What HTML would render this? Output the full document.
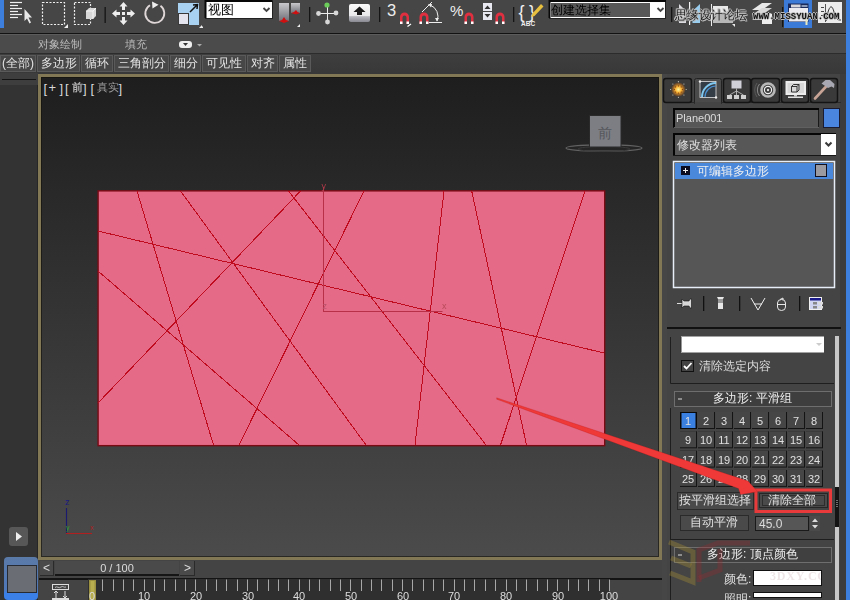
<!DOCTYPE html>
<html><head><meta charset="utf-8">
<style>
*{margin:0;padding:0;box-sizing:border-box}
html,body{width:850px;height:600px;overflow:hidden;background:#444;font-family:"Liberation Sans",sans-serif}
.a{position:absolute}
.t{position:absolute;white-space:nowrap;line-height:1;will-change:transform}
#tb{left:0;top:0;width:850px;height:33px;background:#464646}
#tbl{left:0;top:33px;width:850px;height:1px;background:#121212}
#rb{left:0;top:34px;width:850px;height:20px;background:#4b4b4b;border-top:1px solid #5c5c5c;border-bottom:1px solid #2c2c2c}
#br{left:0;top:54px;width:846px;height:20px;background:linear-gradient(#3e3e3e,#383838)}
.btn{will-change:transform;position:absolute;top:55px;height:17px;background:#474747;border:1px solid #5a5a5a;color:#e4e4e4;font-size:12px;text-align:center;line-height:15px}
#lc{left:0;top:73px;width:38px;height:527px;background:#333;border-right:1px solid #262626}
#vp{left:38px;top:74px;width:624px;height:486px;border:3px solid #827856;box-shadow:inset 0 0 0 1px rgba(20,16,8,0.6);background:linear-gradient(#1e1e1e,#4b4b4b)}
#cp{left:662px;top:74px;width:188px;height:526px;background:#444}
</style></head>
<body>
<div class="a" id="tb"></div>
<div class="a" id="tbl"></div>

<svg class="a" style="left:0;top:0" width="850" height="34" viewBox="0 0 850 34">
  <rect x="0" y="0" width="4" height="28" fill="#3d7fdc"/>
  <!-- select by name -->
  <g stroke="#f0f0f0" stroke-width="1.2">
    <line x1="10" y1="2.5" x2="22" y2="2.5"/><line x1="10" y1="5.5" x2="18" y2="5.5"/>
    <line x1="10" y1="8.5" x2="22" y2="8.5"/><line x1="10" y1="11.5" x2="18" y2="11.5"/>
    <line x1="10" y1="14.5" x2="22" y2="14.5"/><line x1="10" y1="17.5" x2="18" y2="17.5"/>
  </g>
  <path d="M24.5 9 L24.5 21 L27 18.5 L29.5 23.5 L31 22.5 L28.5 17.5 L32 17.5 Z" fill="#e8e8e8"/>
  <!-- dashed rect -->
  <rect x="42.5" y="2.5" width="22" height="22" fill="none" stroke="#f0f0f0" stroke-width="1.2" stroke-dasharray="2 1.5"/>
  <path d="M68 24 L68 28 L64 28 Z" fill="#f0f0f0"/>
  <rect x="74.5" y="2.5" width="16" height="22" fill="none" stroke="#f0f0f0" stroke-width="1.2" stroke-dasharray="2 1.5"/>
  <path d="M86 11 L89 8 L96 8 L96 16 L93 19 L86 19 Z" fill="#d8d8d8"/>
  <path d="M86 11 L93 11 L96 8 M93 11 L93 19" stroke="#fff" stroke-width="0.8" fill="none"/>
  <rect x="104.5" y="7" width="1.3" height="16" fill="#151515"/>
  <!-- move -->
  <g fill="#eee">
    <path d="M123.5 2 L127.5 6.5 L125 6.5 L125 10 L122 10 L122 6.5 L119.5 6.5 Z"/>
    <path d="M123.5 25 L127.5 20.5 L125 20.5 L125 17 L122 17 L122 20.5 L119.5 20.5 Z"/>
    <path d="M112 13.5 L116.5 9.5 L116.5 12 L120 12 L120 15 L116.5 15 L116.5 17.5 Z"/>
    <path d="M135 13.5 L130.5 9.5 L130.5 12 L127 12 L127 15 L130.5 15 L130.5 17.5 Z"/>
    <rect x="122" y="12" width="3" height="3"/>
  </g>
  <!-- rotate -->
  <path d="M150 5.2 A9.5 9.5 0 1 0 160.5 5.8" fill="none" stroke="#e0d8d8" stroke-width="1.8"/>
  <path d="M152 1.5 L158.5 4.8 L152.5 8.5 Z" fill="#eee"/>
  <!-- scale -->
  <rect x="178" y="3" width="21" height="22" fill="#a8d0f0"/>
  <rect x="178.5" y="13.5" width="10" height="11" fill="#e4e4ee" stroke="#3a3a3a" stroke-width="1"/>
  <path d="M190 12 L197 5 M193 5 L197.5 4.5 L197 9" stroke="#111" stroke-width="1.5" fill="none"/>
  <path d="M202 25 L202 28 L199 28 Z" fill="#eee"/>
  <!-- dropdown 视图 -->
  <rect x="205.5" y="1.5" width="67" height="17" fill="#fff" stroke="#222" stroke-width="1"/><path d="M205.5 18 L205.5 1 L272.5 1" stroke="#080808" stroke-width="2" fill="none"/>
  <path d="M263.5 8 L266.5 11 L269.5 8" stroke="#444" stroke-width="1.8" fill="none"/>
  <path d="M203 26 L203 28 L201 28 Z" fill="#eee"/>
  <!-- gray bars -->
  <defs>
    <linearGradient id="gb" x1="0" y1="0" x2="0" y2="1"><stop offset="0" stop-color="#c8c8cc"/><stop offset="1" stop-color="#70727a"/></linearGradient>
    <linearGradient id="key" x1="0" y1="0" x2="0" y2="1"><stop offset="0" stop-color="#fafafa"/><stop offset="0.65" stop-color="#e8e8ea"/><stop offset="0.7" stop-color="#b8b9c0"/><stop offset="1" stop-color="#8a8b92"/></linearGradient>
  </defs>
  <rect x="279" y="3" width="10" height="18" fill="url(#gb)"/>
  <rect x="291" y="3" width="9" height="10" fill="url(#gb)"/>
  <path d="M284 17 L286 20 L289 21 L284 23 L279 21 L282 20 Z" fill="#d01010"/>
  <path d="M296 10 L297.5 12 L300 13 L296 14.5 L291 13 L294 12 Z" fill="#d01010"/>
  <path d="M300 24 L300 27 L297 27 Z" fill="#eee"/>
  <rect x="309" y="7" width="1.3" height="15" fill="#151515"/>
  <!-- pivot -->
  <g stroke="#eee" stroke-width="1"><line x1="320" y1="13.5" x2="335" y2="13.5"/><line x1="327.5" y1="6" x2="327.5" y2="21"/></g>
  <circle cx="327" cy="5" r="2.6" fill="#6ccc5a"/>
  <circle cx="318.5" cy="13.5" r="2.4" fill="#d8d8d8"/>
  <circle cx="336" cy="13" r="2.4" fill="#d8d8d8"/>
  <circle cx="327.5" cy="22" r="2.4" fill="#d8d8d8"/>
  <!-- key button -->
  <rect x="349" y="4" width="21" height="18" rx="2" fill="url(#key)"/>
  <path d="M359.5 6.5 L365.5 12 L362 12 L362 15 L357 15 L357 12 L353.5 12 Z" fill="#1a1a1a"/>
  <rect x="379" y="7" width="1.3" height="15" fill="#151515"/>
  <!-- snaps -->
  <text x="387" y="15.5" font-size="16.5" fill="#eee" font-family="Liberation Sans">3</text>
  <g id="mag">
    <path d="M400 24 L400 17 A4.5 4.5 0 0 1 409 17 L409 24 L406.5 24 L406.5 17.5 A2 2 0 0 0 402.5 17.5 L402.5 24 Z" fill="#e03040"/>
    <rect x="400" y="21.5" width="2.5" height="2.5" fill="#fff"/><rect x="406.5" y="21.5" width="2.5" height="2.5" fill="#fff"/>
  </g>
  <path d="M407.5 26.5 L411 24" stroke="#fff" stroke-width="1.2"/>
  <use href="#mag" x="19.5"/>
  <path d="M422 12 L432 2" stroke="#eee" stroke-width="1"/>
  <path d="M430 5 A12 12 0 0 1 437 21" stroke="#eee" stroke-width="1" fill="none"/>
  <path d="M429 22.5 L442 22.5" stroke="#eee" stroke-width="1"/>
  <path d="M428 4 L432 4 L431 7.5 Z M435 18 L439 18 L437 21.5 Z" fill="#eee"/>
  <text x="450" y="15.5" font-size="15" fill="#eee" font-family="Liberation Sans">%</text>
  <use href="#mag" x="64.5"/>
  <rect x="483" y="3" width="9" height="8" fill="#e8e8f0"/><rect x="483" y="12" width="9" height="8" fill="#e8e8f0"/>
  <path d="M484.5 9 L487.5 5.5 L490.5 9 Z M484.5 14 L490.5 14 L487.5 17.5 Z" fill="#333"/>
  <use href="#mag" x="95.5"/>
  <rect x="513" y="7" width="1.3" height="15" fill="#151515"/>
  <!-- named sel -->
  <text x="518.5" y="17.5" font-size="18" fill="#eee" font-family="Liberation Sans">{</text><text x="529" y="17.5" font-size="18" fill="#eee" font-family="Liberation Sans">}</text>
  <text x="521" y="25.5" font-size="6.5" font-weight="bold" fill="#eee" font-family="Liberation Sans">ABC</text>
  <path d="M532 14 L541 4 L543.5 6.5 L534.5 16 L531 17 Z" fill="#e8c040"/>
  <!-- dropdown 创建选择集 -->
  <rect x="549.5" y="1.5" width="116" height="17" fill="#fff" stroke="#222" stroke-width="1"/><path d="M549.5 18 L549.5 1 L666 1" stroke="#080808" stroke-width="2" fill="none"/>
  <rect x="551" y="3" width="99" height="14" fill="#585858"/>
  <path d="M657.5 8 L660.5 11 L663.5 8" stroke="#444" stroke-width="1.8" fill="none"/>
  <rect x="671" y="7" width="1.3" height="15" fill="#151515"/>
  <!-- mirror -->
  <path d="M679 4 L686 11 L686 23 L679 23 Z" fill="#dcdce0"/>
  <path d="M700 4 L700 23 L692.5 23 L692.5 11 Z" fill="#98cdf0"/>
  <rect x="689" y="2" width="1.2" height="23" fill="#f4f4f4"/>
  <!-- align -->
  <rect x="711" y="4" width="1" height="22" fill="#eee"/>
  <rect x="713" y="6" width="15" height="8" fill="#e8e8e8"/>
  <rect x="713" y="15" width="20" height="8" fill="#b8b8b8"/>
  <path d="M732 24 L735 24 L735 27 Z" fill="#eee"/>
  <!-- layers -->
  <path d="M752 10 L762 3 L772 3 L762 10 Z" fill="#e8e8e8"/>
  <path d="M752 15 L762 8 L772 8 L762 15 Z" fill="#d8d8d8"/>
  <path d="M752 20 L762 13 L772 13 L762 20 Z" fill="#c8c8c8"/>
  <rect x="762" y="14" width="10" height="10" fill="#eee"/>
  <rect x="782" y="7" width="1.3" height="20" fill="#151515"/>
  <!-- explorer (active) -->
  <rect x="784" y="0" width="28" height="28" fill="#3c7ad8"/>
  <rect x="788" y="3.5" width="20.5" height="18.5" fill="#1a2a5a"/>
  <rect x="791" y="4.5" width="9.5" height="3" fill="#d8d8dc"/>
  <rect x="801.5" y="5" width="6" height="2" fill="#8a9ab8"/>
  <rect x="789" y="8" width="19" height="13.5" fill="#ececf0"/>
  <rect x="805.5" y="13" width="2" height="12" fill="#e8e8c0"/>
  <!-- curve editor -->
  <rect x="818" y="2" width="24" height="21" fill="#ececec"/>
  <path d="M826 21 C829 4 832 4 834 12 C836 20 838 20 841 20" stroke="#333" stroke-width="1" fill="none"/>
  <rect x="825" y="4" width="1" height="18" fill="#555"/>
  <rect x="821" y="7" width="3" height="1" fill="#444"/><rect x="821" y="11" width="3" height="1" fill="#444"/><rect x="821" y="15" width="3" height="1" fill="#444"/>
  <rect x="846" y="0" width="4" height="34" fill="#3d7fdc"/>
</svg>
<div class="t" style="left:207.5px;top:3.5px;font-size:12.5px;color:#000">视图</div>
<div class="t" style="left:551px;top:4px;font-size:12px;color:#000">创建选择集</div>
<div class="t" style="left:675px;top:8.5px;font-size:12px;color:#1a1a1a;text-shadow:1px 0 #bbb,-1px 0 #bbb,0 1px #bbb,0 -1px #bbb,1px 1px #bbb,-1px -1px #bbb">思缘设计论坛</div>
<div class="t" style="left:753px;top:13px;font-size:9px;font-family:'Liberation Mono',monospace;font-weight:bold;color:#111;text-shadow:1px 0 #bbb,-1px 0 #bbb,0 1px #bbb,0 -1px #bbb">WWW.MISSYUAN.COM</div>

<!--TBEND-->
<div class="a" id="rb"></div>
<div class="a" id="br"></div>

<div class="t" style="left:38px;top:39px;font-size:11px;color:#bcbcbc">对象绘制</div>
<div class="t" style="left:125px;top:39px;font-size:11px;color:#bcbcbc">填充</div>
<svg class="a" style="left:175px;top:38px" width="30" height="14">
  <rect x="4" y="3" width="13" height="7" rx="3" fill="#eee"/>
  <path d="M8 5 L13 5 L10.5 8 Z" fill="#333"/>
  <path d="M22 6 L27 6 L24.5 8.5 Z" fill="#aaa"/>
</svg>
<div class="btn" style="left:0;width:36px">(全部)</div>
<div class="btn" style="left:37px;width:43px">多边形</div>
<div class="btn" style="left:81px;width:32px">循环</div>
<div class="btn" style="left:114px;width:55px">三角剖分</div>
<div class="btn" style="left:170px;width:31px">细分</div>
<div class="btn" style="left:202px;width:44px">可见性</div>
<div class="btn" style="left:247px;width:31px">对齐</div>
<div class="btn" style="left:279px;width:32px">属性</div>
<div class="a" id="lc"></div>

<div class="a" style="left:0;top:73px;width:38px;height:12px;background:#3e3e3e"></div>
<div class="a" style="left:2px;top:78.5px;width:34px;height:1.5px;background:#141414"></div>
<div class="a" style="left:9px;top:527px;width:19px;height:19px;border-radius:3px;background:#575757"></div>
<svg class="a" style="left:9px;top:527px" width="19" height="19"><path d="M7 5 L13 9.5 L7 14 Z" fill="#eee"/></svg>
<div class="a" style="left:4px;top:557px;width:34px;height:43px;border-radius:4px;background:linear-gradient(#5a7aa8,#4f78b8 75%,#3a80e8 85%)"></div>
<div class="a" style="left:7px;top:565px;width:30px;height:28px;background:#6a6d74;border:1px solid #262a32"></div>
<div class="a" id="vp"></div>

<svg class="a" style="left:40px;top:78px" width="90" height="20" viewBox="40 78 90 20">
  <g font-family="Liberation Sans" font-size="13" fill="#d8d8d8">
    <text x="43.5" y="92.5">[</text><text x="48.5" y="92">+</text><text x="59.5" y="92.5">]</text>
    <text x="65" y="92.5">[</text><text x="83" y="92.5">]</text>
    <text x="90.5" y="92.5">[</text><text x="118.5" y="92.5">]</text>
  </g>
</svg>
<div class="t" style="left:71.5px;top:81.5px;font-size:11px;color:#b0b0b0;font-weight:bold">前</div>
<div class="t" style="left:96.5px;top:82px;font-size:11px;color:#9c9c9c;font-family:'Liberation Serif',serif">真实</div>
<svg class="a" style="left:560px;top:108px" width="90" height="50" viewBox="560 108 90 50">
  <ellipse cx="604" cy="148" rx="38" ry="3.2" fill="none" stroke="#626262" stroke-width="1.2"/>
  <ellipse cx="604" cy="149" rx="26" ry="2.5" fill="none" stroke="#3a3a3a" stroke-width="1"/>
  <rect x="589.5" y="115.5" width="31.5" height="31.5" fill="#7c7e84" stroke="#2a2a2a" stroke-width="1"/>
  <text x="598" y="138" font-size="14" fill="#55575c" font-family="Liberation Sans">前</text>
</svg>
<svg class="a" style="left:55px;top:490px" width="50" height="50" viewBox="55 490 50 50">
  <text x="65" y="505" font-size="9" fill="#1a1a80" font-family="Liberation Sans">z</text>
  <line x1="66.5" y1="508" x2="66.5" y2="533" stroke="#1a1a70" stroke-width="1.1"/>
  <line x1="66" y1="533.5" x2="92" y2="533.5" stroke="#b02020" stroke-width="1.1"/>
  <text x="66" y="530" font-size="7" fill="#30a030" font-family="Liberation Sans">y</text>
  <text x="90" y="530" font-size="7" fill="#b02020" font-family="Liberation Sans">x</text>
</svg>

<div class="a" style="left:40px;top:561px;width:14px;height:15px;background:#4a4a4a;border-right:1px solid #2a2a2a;border-bottom:1px solid #2a2a2a"></div>
<div class="t" style="left:43px;top:562px;font-size:12px;color:#ddd">&lt;</div>
<div class="a" style="left:55px;top:561px;width:124px;height:15px;background:#4a4a4a;border-bottom:2px solid #151515"></div>
<div class="t" style="left:55px;top:563px;width:124px;text-align:center;font-size:11px;color:#dcdcdc">0 / 100</div>
<div class="a" style="left:180px;top:561px;width:15px;height:15px;background:#4a4a4a;border-right:1px solid #2a2a2a;border-bottom:1px solid #2a2a2a"></div>
<div class="t" style="left:184px;top:562px;font-size:12px;color:#ddd">&gt;</div>
<div class="a" style="left:39px;top:578px;width:623px;height:2px;background:#141414"></div>
<div class="a" style="left:88px;top:579px;width:521px;height:21px;background:#2f2f2f"></div>
<svg class="a" style="left:0;top:575px" width="662" height="25" viewBox="0 575 662 25">
  <rect x="52.5" y="584.5" width="16" height="5" fill="none" stroke="#ddd" stroke-width="1"/>
  <path d="M55 587.5 C57 585.5 59 589 61 587 C63 585.5 64 588 66 587" stroke="#ddd" fill="none" stroke-width="0.8"/>
  <path d="M56 591 L56 598 M54 593 L56 591 L58 593 M65 591 L65 598 M63 596 L65 598 L67 596" stroke="#ddd" stroke-width="1" fill="none"/>
  <rect x="52" y="598" width="17" height="2" fill="#ddd"/>
  <rect x="89" y="580" width="7" height="20" fill="#9a9040"/>
  <rect x="90.5" y="581" width="4" height="19" fill="#b8ae50"/>
  <g stroke="#a8a8a8" stroke-width="1"><line x1="102.5" y1="579.5" x2="102.5" y2="591"/><line x1="113.5" y1="579.5" x2="113.5" y2="591"/><line x1="123.5" y1="579.5" x2="123.5" y2="591"/><line x1="133.5" y1="579.5" x2="133.5" y2="591"/><line x1="144.5" y1="579.5" x2="144.5" y2="591"/><line x1="154.5" y1="579.5" x2="154.5" y2="591"/><line x1="164.5" y1="579.5" x2="164.5" y2="591"/><line x1="175.5" y1="579.5" x2="175.5" y2="591"/><line x1="185.5" y1="579.5" x2="185.5" y2="591"/><line x1="195.5" y1="579.5" x2="195.5" y2="591"/><line x1="206.5" y1="579.5" x2="206.5" y2="591"/><line x1="216.5" y1="579.5" x2="216.5" y2="591"/><line x1="226.5" y1="579.5" x2="226.5" y2="591"/><line x1="237.5" y1="579.5" x2="237.5" y2="591"/><line x1="247.5" y1="579.5" x2="247.5" y2="591"/><line x1="257.5" y1="579.5" x2="257.5" y2="591"/><line x1="268.5" y1="579.5" x2="268.5" y2="591"/><line x1="278.5" y1="579.5" x2="278.5" y2="591"/><line x1="288.5" y1="579.5" x2="288.5" y2="591"/><line x1="299.5" y1="579.5" x2="299.5" y2="591"/><line x1="309.5" y1="579.5" x2="309.5" y2="591"/><line x1="319.5" y1="579.5" x2="319.5" y2="591"/><line x1="330.5" y1="579.5" x2="330.5" y2="591"/><line x1="340.5" y1="579.5" x2="340.5" y2="591"/><line x1="350.5" y1="579.5" x2="350.5" y2="591"/><line x1="361.5" y1="579.5" x2="361.5" y2="591"/><line x1="371.5" y1="579.5" x2="371.5" y2="591"/><line x1="381.5" y1="579.5" x2="381.5" y2="591"/><line x1="392.5" y1="579.5" x2="392.5" y2="591"/><line x1="402.5" y1="579.5" x2="402.5" y2="591"/><line x1="412.5" y1="579.5" x2="412.5" y2="591"/><line x1="423.5" y1="579.5" x2="423.5" y2="591"/><line x1="433.5" y1="579.5" x2="433.5" y2="591"/><line x1="443.5" y1="579.5" x2="443.5" y2="591"/><line x1="454.5" y1="579.5" x2="454.5" y2="591"/><line x1="464.5" y1="579.5" x2="464.5" y2="591"/><line x1="474.5" y1="579.5" x2="474.5" y2="591"/><line x1="485.5" y1="579.5" x2="485.5" y2="591"/><line x1="495.5" y1="579.5" x2="495.5" y2="591"/><line x1="506.5" y1="579.5" x2="506.5" y2="591"/><line x1="516.5" y1="579.5" x2="516.5" y2="591"/><line x1="526.5" y1="579.5" x2="526.5" y2="591"/><line x1="537.5" y1="579.5" x2="537.5" y2="591"/><line x1="547.5" y1="579.5" x2="547.5" y2="591"/><line x1="557.5" y1="579.5" x2="557.5" y2="591"/><line x1="568.5" y1="579.5" x2="568.5" y2="591"/><line x1="578.5" y1="579.5" x2="578.5" y2="591"/><line x1="588.5" y1="579.5" x2="588.5" y2="591"/><line x1="599.5" y1="579.5" x2="599.5" y2="591"/><line x1="609.5" y1="579.5" x2="609.5" y2="591"/></g>
</svg>
<div class="t" style="left:77.4px;top:591px;width:30px;text-align:center;font-size:11px;color:#ddd">0</div><div class="t" style="left:129.1px;top:591px;width:30px;text-align:center;font-size:11px;color:#ddd">10</div><div class="t" style="left:180.8px;top:591px;width:30px;text-align:center;font-size:11px;color:#ddd">20</div><div class="t" style="left:232.5px;top:591px;width:30px;text-align:center;font-size:11px;color:#ddd">30</div><div class="t" style="left:284.2px;top:591px;width:30px;text-align:center;font-size:11px;color:#ddd">40</div><div class="t" style="left:335.9px;top:591px;width:30px;text-align:center;font-size:11px;color:#ddd">50</div><div class="t" style="left:387.6px;top:591px;width:30px;text-align:center;font-size:11px;color:#ddd">60</div><div class="t" style="left:439.3px;top:591px;width:30px;text-align:center;font-size:11px;color:#ddd">70</div><div class="t" style="left:491.0px;top:591px;width:30px;text-align:center;font-size:11px;color:#ddd">80</div><div class="t" style="left:542.7px;top:591px;width:30px;text-align:center;font-size:11px;color:#ddd">90</div><div class="t" style="left:594.4px;top:591px;width:30px;text-align:center;font-size:11px;color:#ddd">100</div><div class="a" id="cp"></div>
<div class="a" style="left:662px;top:74px;width:5px;height:526px;background:#464646"></div>
<div class="a" style="left:840px;top:74px;width:6px;height:526px;background:#3c3c3c"></div>
<div class="a" style="left:846px;top:34px;width:4px;height:566px;background:#3d7fdc"></div>
<svg class="a" style="left:662px;top:73px" width="184" height="527" viewBox="662 73 184 527">
  <defs>
    <radialGradient id="sun"><stop offset="0" stop-color="#fff8a0"/><stop offset="0.45" stop-color="#f8b030"/><stop offset="1" stop-color="#c06010" stop-opacity="0.2"/></radialGradient>
  </defs>
  <line x1="667" y1="102.5" x2="841" y2="102.5" stroke="#2a2a2a" stroke-width="1"/>
  <!-- tabs -->
  <rect x="663.5" y="78.5" width="28" height="24" rx="2.5" fill="#3a3a3a" stroke="#141414" stroke-width="1.5"/>
  <rect x="694.5" y="78.5" width="27" height="26" rx="2" fill="#4a4a4a" stroke="#222" stroke-width="1"/>
  <rect x="695" y="102" width="26" height="3" fill="#444"/>
  <rect x="723.5" y="78.5" width="27" height="24" rx="2.5" fill="#3a3a3a" stroke="#141414" stroke-width="1.5"/>
  <rect x="751.5" y="78.5" width="28" height="24" rx="2.5" fill="#3a3a3a" stroke="#141414" stroke-width="1.5"/>
  <rect x="781.5" y="78.5" width="27" height="24" rx="2.5" fill="#3a3a3a" stroke="#141414" stroke-width="1.5"/>
  <rect x="810.5" y="78.5" width="27" height="24" rx="2.5" fill="#3a3a3a" stroke="#141414" stroke-width="1.5"/>
  <!-- sun -->
  <circle cx="678.4" cy="89.5" r="7" fill="url(#sun)"/>
  <circle cx="682.40" cy="89.50" r="0.6" fill="#7a3a10"/><circle cx="686.20" cy="89.50" r="0.6" fill="#c8c8c0"/><circle cx="681.23" cy="92.05" r="0.6" fill="#7a3a10"/><circle cx="683.92" cy="95.02" r="0.6" fill="#c8c8c0"/><circle cx="678.40" cy="93.10" r="0.6" fill="#7a3a10"/><circle cx="678.40" cy="97.30" r="0.6" fill="#c8c8c0"/><circle cx="675.57" cy="92.05" r="0.6" fill="#7a3a10"/><circle cx="672.88" cy="95.02" r="0.6" fill="#c8c8c0"/><circle cx="674.40" cy="89.50" r="0.6" fill="#7a3a10"/><circle cx="670.60" cy="89.50" r="0.6" fill="#c8c8c0"/><circle cx="675.57" cy="86.95" r="0.6" fill="#7a3a10"/><circle cx="672.88" cy="83.98" r="0.6" fill="#c8c8c0"/><circle cx="678.40" cy="85.90" r="0.6" fill="#7a3a10"/><circle cx="678.40" cy="81.70" r="0.6" fill="#c8c8c0"/><circle cx="681.23" cy="86.95" r="0.6" fill="#7a3a10"/><circle cx="683.92" cy="83.98" r="0.6" fill="#c8c8c0"/>
  <!-- modify arc -->
  <rect x="700" y="81.5" width="16" height="16" fill="#343c46" stroke="#e0e0e0" stroke-width="0.8"/>
  <path d="M702 97 A14 14 0 0 1 716 83" stroke="#80c8f0" stroke-width="2" fill="none"/>
  <path d="M705 97 A11 11 0 0 1 716 86" stroke="#4a90d0" stroke-width="1.2" fill="none"/>
  <circle cx="700" cy="81.5" r="1.2" fill="#eee"/><circle cx="716" cy="97.5" r="1.2" fill="#eee"/>
  <!-- hierarchy -->
  <rect x="731.5" y="80.5" width="10" height="8" fill="#d0d0d8"/>
  <path d="M736.5 88.5 L736.5 95 M736.5 91 L729.5 95 M736.5 91 L743.5 95" stroke="#ccc" stroke-width="0.8" fill="none"/>
  <rect x="727" y="95" width="5" height="4" fill="#d0d0d0"/><rect x="734" y="95" width="5" height="4" fill="#d0d0d0"/><rect x="741" y="95" width="5" height="4" fill="#d0d0d0"/>
  <!-- motion -->
  <circle cx="768" cy="90" r="6.5" fill="none" stroke="#b8b8b8" stroke-width="2.6"/>
  <circle cx="768" cy="90" r="3.6" fill="none" stroke="#f0f0f0" stroke-width="1.2"/>
  <circle cx="768" cy="90" r="1.2" fill="#e0e0e0"/>
  <path d="M759.5 84 A9.5 9.5 0 0 0 759.5 96" stroke="#8a8a8a" stroke-width="1" fill="none"/>
  <path d="M757 83 A12 12 0 0 0 757 97" stroke="#5a5a5a" stroke-width="1" fill="none"/>
  <!-- display -->
  <rect x="785.5" y="81" width="20.5" height="14" fill="#ececec"/>
  <rect x="787.5" y="83" width="16.5" height="10" fill="#d8d8d8"/>
  <path d="M791.5 86.5 L793.5 84.5 L799 84.5 L799 90 L797 92 L791.5 92 Z M791.5 86.5 L797 86.5 L797 92 M797 86.5 L799 84.5" stroke="#222" stroke-width="0.9" fill="none"/>
  <rect x="794" y="95" width="3" height="1.5" fill="#ccc"/>
  <rect x="788" y="96.5" width="15" height="1.5" fill="#e0e0e0"/>
  <!-- hammer -->
  <path d="M815 98.5 L827.5 85" stroke="#c8a496" stroke-width="2.6" stroke-linecap="round"/>
  <path d="M821.5 83.5 L825.5 80 L830 80 L834.5 84 L834 88 L831.5 86.5 L828 88 Z" fill="#a8a8b2"/>
  <!-- name field -->
  <rect x="673.5" y="108.5" width="145" height="19" fill="#575757" stroke="#1a1a1a" stroke-width="1"/><path d="M674 127 L674 109 L819 109" stroke="#050505" stroke-width="2" fill="none"/>
  <line x1="674" y1="127.5" x2="819" y2="127.5" stroke="#606060" stroke-width="1"/>
  <rect x="823.5" y="108.5" width="16" height="19" fill="#4a86e0" stroke="#1a1a30" stroke-width="1"/>
  <!-- modifier list -->
  <rect x="673.5" y="133.5" width="162" height="22" fill="#575757" stroke="#161616" stroke-width="1"/><path d="M674 155 L674 134 L836 134" stroke="#050505" stroke-width="2" fill="none"/>
  <rect x="821" y="134" width="15" height="21" fill="#fff"/>
  <path d="M825.5 142.5 L828.5 145.5 L831.5 142.5" stroke="#3a3a3a" stroke-width="2" fill="none"/>
  <!-- stack -->
  <rect x="673.5" y="161.5" width="161" height="126" fill="#565656" stroke="#e8eef8" stroke-width="1.5"/>
  <rect x="675" y="163" width="158" height="16" fill="#4a88dc"/>
  <rect x="681" y="166" width="9" height="9" fill="#0a0a20"/>
  <path d="M683 170.5 L688 170.5 M685.5 168 L685.5 173" stroke="#eee" stroke-width="1"/>
  <rect x="815.5" y="164.5" width="11" height="12" fill="#9a9aa0" stroke="#101020" stroke-width="1"/>
  <!-- stack toolbar -->
  <path d="M677 303.5 L682 303.5" stroke="#ddd" stroke-width="1"/>
  <path d="M682 299 L684 301 L689 301 L690 299 L691.5 299 L691.5 308 L690 308 L689 306 L684 306 L682 308 Z" fill="#d8d8d8" stroke="#111" stroke-width="0.6"/>
  <rect x="703" y="296" width="1.3" height="15" fill="#111"/>
  <path d="M717 297 L724 297 L723 299 L723 309 L718 309 L718 299 Z" fill="#e8e8e8"/>
  <rect x="718" y="299" width="5" height="4" fill="#999"/>
  <rect x="739" y="296" width="1.3" height="15" fill="#111"/>
  <path d="M751 298 L758 310 L765 298 M754 304 L762 304" stroke="#eee" stroke-width="1" fill="none"/>
  <path d="M777.5 303 A4 3.5 0 0 1 785.5 303 L785.5 307 A4 3.5 0 0 1 777.5 307 Z M777.5 304.5 L785.5 304.5 M780 299.5 L783 298 L783 300" stroke="#e8e8e8" stroke-width="1" fill="none"/>
  <rect x="799" y="296" width="1.3" height="15" fill="#111"/>
  <rect x="809.5" y="297.5" width="12" height="12" fill="#d0d4f0" stroke="#f0f0f0" stroke-width="1"/>
  <rect x="810" y="298" width="11" height="2.5" fill="#1a1a8a"/>
  <rect x="813" y="302" width="4" height="2.5" fill="#888"/><rect x="818" y="302" width="5" height="2.5" fill="#ddd"/>
  <rect x="813" y="306" width="4" height="2.5" fill="#888"/><rect x="818" y="306" width="5" height="2.5" fill="#ddd"/>
  <!-- divider -->
  <rect x="667" y="327" width="174" height="2" fill="#111"/>
  <!-- rollout 1 -->
  <path d="M670.5 337 L670.5 383.5 L834 383.5" stroke="#1e1e1e" stroke-width="1" fill="none"/>
  <rect x="681" y="336.5" width="143" height="16" fill="#fff"/>
  <path d="M681 337 L681 352" stroke="#333" stroke-width="1"/>
  <path d="M816 343 L822 343 L819 346 Z" fill="#ccc"/>
  <rect x="681.5" y="360.5" width="12" height="11" fill="#444" stroke="#111" stroke-width="1"/>
  <path d="M684 366 L686.5 368.5 L691.5 363" stroke="#fff" stroke-width="1.8" fill="none"/>
  <rect x="835" y="336" width="4" height="152" fill="#c8c8c8"/>
  <rect x="835" y="487" width="4" height="40" fill="#141414"/>
  <rect x="835" y="527" width="4" height="73" fill="#c8c8c8"/>
  <g fill="#888"><rect x="836" y="500" width="2" height="0.8"/><rect x="836" y="502" width="2" height="0.8"/><rect x="836" y="504" width="2" height="0.8"/><rect x="836" y="506" width="2" height="0.8"/></g>
  <!-- smoothing rollout -->
  <rect x="674.5" y="391.5" width="157" height="15" fill="#3e3e3e" stroke="#6e6e6e" stroke-width="1"/>
  <line x1="678" y1="399" x2="682" y2="399" stroke="#ddd" stroke-width="1"/>
  <path d="M670.5 408 L670.5 600 M670.5 539.5 L834 539.5" stroke="#1e1e1e" stroke-width="1" fill="none"/>
  <g><rect x="680" y="412" width="17" height="17" fill="#0a0a0a"/><rect x="681.5" y="413" width="14" height="15" fill="#3a80e0"/><rect x="698" y="412" width="17" height="17" fill="#141414"/><rect x="698" y="412" width="16" height="16" fill="#464646"/><rect x="716" y="412" width="17" height="17" fill="#141414"/><rect x="716" y="412" width="16" height="16" fill="#464646"/><rect x="734" y="412" width="17" height="17" fill="#141414"/><rect x="734" y="412" width="16" height="16" fill="#464646"/><rect x="752" y="412" width="17" height="17" fill="#141414"/><rect x="752" y="412" width="16" height="16" fill="#464646"/><rect x="770" y="412" width="17" height="17" fill="#141414"/><rect x="770" y="412" width="16" height="16" fill="#464646"/><rect x="788" y="412" width="17" height="17" fill="#141414"/><rect x="788" y="412" width="16" height="16" fill="#464646"/><rect x="806" y="412" width="17" height="17" fill="#141414"/><rect x="806" y="412" width="16" height="16" fill="#464646"/><rect x="680" y="431.3" width="17" height="17" fill="#141414"/><rect x="680" y="431.3" width="16" height="16" fill="#464646"/><rect x="698" y="431.3" width="17" height="17" fill="#141414"/><rect x="698" y="431.3" width="16" height="16" fill="#464646"/><rect x="716" y="431.3" width="17" height="17" fill="#141414"/><rect x="716" y="431.3" width="16" height="16" fill="#464646"/><rect x="734" y="431.3" width="17" height="17" fill="#141414"/><rect x="734" y="431.3" width="16" height="16" fill="#464646"/><rect x="752" y="431.3" width="17" height="17" fill="#141414"/><rect x="752" y="431.3" width="16" height="16" fill="#464646"/><rect x="770" y="431.3" width="17" height="17" fill="#141414"/><rect x="770" y="431.3" width="16" height="16" fill="#464646"/><rect x="788" y="431.3" width="17" height="17" fill="#141414"/><rect x="788" y="431.3" width="16" height="16" fill="#464646"/><rect x="806" y="431.3" width="17" height="17" fill="#141414"/><rect x="806" y="431.3" width="16" height="16" fill="#464646"/><rect x="680" y="450.6" width="17" height="17" fill="#141414"/><rect x="680" y="450.6" width="16" height="16" fill="#464646"/><rect x="698" y="450.6" width="17" height="17" fill="#141414"/><rect x="698" y="450.6" width="16" height="16" fill="#464646"/><rect x="716" y="450.6" width="17" height="17" fill="#141414"/><rect x="716" y="450.6" width="16" height="16" fill="#464646"/><rect x="734" y="450.6" width="17" height="17" fill="#141414"/><rect x="734" y="450.6" width="16" height="16" fill="#464646"/><rect x="752" y="450.6" width="17" height="17" fill="#141414"/><rect x="752" y="450.6" width="16" height="16" fill="#464646"/><rect x="770" y="450.6" width="17" height="17" fill="#141414"/><rect x="770" y="450.6" width="16" height="16" fill="#464646"/><rect x="788" y="450.6" width="17" height="17" fill="#141414"/><rect x="788" y="450.6" width="16" height="16" fill="#464646"/><rect x="806" y="450.6" width="17" height="17" fill="#141414"/><rect x="806" y="450.6" width="16" height="16" fill="#464646"/><rect x="680" y="469.9" width="17" height="17" fill="#141414"/><rect x="680" y="469.9" width="16" height="16" fill="#464646"/><rect x="698" y="469.9" width="17" height="17" fill="#141414"/><rect x="698" y="469.9" width="16" height="16" fill="#464646"/><rect x="716" y="469.9" width="17" height="17" fill="#141414"/><rect x="716" y="469.9" width="16" height="16" fill="#464646"/><rect x="734" y="469.9" width="17" height="17" fill="#141414"/><rect x="734" y="469.9" width="16" height="16" fill="#464646"/><rect x="752" y="469.9" width="17" height="17" fill="#141414"/><rect x="752" y="469.9" width="16" height="16" fill="#464646"/><rect x="770" y="469.9" width="17" height="17" fill="#141414"/><rect x="770" y="469.9" width="16" height="16" fill="#464646"/><rect x="788" y="469.9" width="17" height="17" fill="#141414"/><rect x="788" y="469.9" width="16" height="16" fill="#464646"/><rect x="806" y="469.9" width="17" height="17" fill="#141414"/><rect x="806" y="469.9" width="16" height="16" fill="#464646"/></g>
  <!-- buttons -->
  <rect x="677.5" y="492.5" width="76" height="17" fill="#4a4a4a" stroke="#2a2a2a" stroke-width="1"/>
  <rect x="759.5" y="493.5" width="68" height="14" fill="#4a4a4a" stroke="#262626" stroke-width="1"/>
  <rect x="762.5" y="495.5" width="62" height="10" fill="none" stroke="#111" stroke-width="1" stroke-dasharray="1 1"/>
  <rect x="680.5" y="515.5" width="68" height="15" fill="#4a4a4a" stroke="#2a2a2a" stroke-width="1"/>
  <rect x="755.5" y="516.5" width="53" height="14" fill="#565656" stroke="#1a1a1a" stroke-width="1"/>
  <rect x="810" y="516" width="10" height="15" fill="#4a4a4a"/>
  <path d="M812 522 L818 522 L815 518.5 Z M812 525 L818 525 L815 528.5 Z" fill="#ddd"/>
  <!-- vertex color rollout -->
  <rect x="674.5" y="547.5" width="157" height="15" fill="rgba(60,60,60,0.4)" stroke="#6e6e6e" stroke-width="1"/>
  <line x1="678" y1="555" x2="682" y2="555" stroke="#ddd" stroke-width="1"/>
  <rect x="753.5" y="570.5" width="68" height="15" fill="#fff" stroke="#111" stroke-width="1"/>
  <rect x="753.5" y="592.5" width="68" height="5" fill="#fff" stroke="#111" stroke-width="1"/>
</svg>
<div class="t" style="left:676px;top:113px;font-size:11px;color:#dcdcdc">Plane001</div>
<div class="t" style="left:677px;top:139px;font-size:12px;color:#e0e0e0">修改器列表</div>
<div class="t" style="left:697px;top:165px;font-size:12px;color:#f0f0f0">可编辑多边形</div>
<div class="t" style="left:699px;top:360px;font-size:12px;color:#dcdcdc">清除选定内容</div>
<div class="t" style="left:713px;top:392px;font-size:12px;color:#f0f0f0">多边形: 平滑组</div>
<div class="t" style="left:679px;top:494px;font-size:12px;color:#e0e0e0">按平滑组选择</div>
<div class="t" style="left:768px;top:494px;font-size:12px;color:#e0e0e0">清除全部</div>
<div class="t" style="left:690px;top:516px;font-size:12px;color:#e0e0e0">自动平滑</div>
<div class="t" style="left:759px;top:518px;font-size:12px;color:#dcdcdc">45.0</div>
<div class="t" style="left:707px;top:548px;font-size:12px;color:#f0f0f0">多边形: 顶点颜色</div>
<div class="t" style="left:724px;top:573px;font-size:12px;color:#e0e0e0">颜色:</div>
<div class="t" style="left:770px;top:570px;font-size:12px;font-weight:bold;font-family:'Liberation Serif',serif;color:rgba(200,170,175,0.3);letter-spacing:0.8px;width:51px;overflow:hidden">3DXY.COM</div>

<div class="t" style="left:724px;top:593px;font-size:12px;color:#e0e0e0">照明:</div>
<div class="t" style="left:678px;top:416.0px;width:20px;text-align:center;font-size:11px;color:#e0e0e0">1</div><div class="t" style="left:696px;top:416.0px;width:20px;text-align:center;font-size:11px;color:#e0e0e0">2</div><div class="t" style="left:714px;top:416.0px;width:20px;text-align:center;font-size:11px;color:#e0e0e0">3</div><div class="t" style="left:732px;top:416.0px;width:20px;text-align:center;font-size:11px;color:#e0e0e0">4</div><div class="t" style="left:750px;top:416.0px;width:20px;text-align:center;font-size:11px;color:#e0e0e0">5</div><div class="t" style="left:768px;top:416.0px;width:20px;text-align:center;font-size:11px;color:#e0e0e0">6</div><div class="t" style="left:786px;top:416.0px;width:20px;text-align:center;font-size:11px;color:#e0e0e0">7</div><div class="t" style="left:804px;top:416.0px;width:20px;text-align:center;font-size:11px;color:#e0e0e0">8</div><div class="t" style="left:678px;top:435.3px;width:20px;text-align:center;font-size:11px;color:#e0e0e0">9</div><div class="t" style="left:696px;top:435.3px;width:20px;text-align:center;font-size:11px;color:#e0e0e0">10</div><div class="t" style="left:714px;top:435.3px;width:20px;text-align:center;font-size:11px;color:#e0e0e0">11</div><div class="t" style="left:732px;top:435.3px;width:20px;text-align:center;font-size:11px;color:#e0e0e0">12</div><div class="t" style="left:750px;top:435.3px;width:20px;text-align:center;font-size:11px;color:#e0e0e0">13</div><div class="t" style="left:768px;top:435.3px;width:20px;text-align:center;font-size:11px;color:#e0e0e0">14</div><div class="t" style="left:786px;top:435.3px;width:20px;text-align:center;font-size:11px;color:#e0e0e0">15</div><div class="t" style="left:804px;top:435.3px;width:20px;text-align:center;font-size:11px;color:#e0e0e0">16</div><div class="t" style="left:678px;top:454.6px;width:20px;text-align:center;font-size:11px;color:#e0e0e0">17</div><div class="t" style="left:696px;top:454.6px;width:20px;text-align:center;font-size:11px;color:#e0e0e0">18</div><div class="t" style="left:714px;top:454.6px;width:20px;text-align:center;font-size:11px;color:#e0e0e0">19</div><div class="t" style="left:732px;top:454.6px;width:20px;text-align:center;font-size:11px;color:#e0e0e0">20</div><div class="t" style="left:750px;top:454.6px;width:20px;text-align:center;font-size:11px;color:#e0e0e0">21</div><div class="t" style="left:768px;top:454.6px;width:20px;text-align:center;font-size:11px;color:#e0e0e0">22</div><div class="t" style="left:786px;top:454.6px;width:20px;text-align:center;font-size:11px;color:#e0e0e0">23</div><div class="t" style="left:804px;top:454.6px;width:20px;text-align:center;font-size:11px;color:#e0e0e0">24</div><div class="t" style="left:678px;top:473.9px;width:20px;text-align:center;font-size:11px;color:#e0e0e0">25</div><div class="t" style="left:696px;top:473.9px;width:20px;text-align:center;font-size:11px;color:#e0e0e0">26</div><div class="t" style="left:714px;top:473.9px;width:20px;text-align:center;font-size:11px;color:#e0e0e0">27</div><div class="t" style="left:732px;top:473.9px;width:20px;text-align:center;font-size:11px;color:#e0e0e0">28</div><div class="t" style="left:750px;top:473.9px;width:20px;text-align:center;font-size:11px;color:#e0e0e0">29</div><div class="t" style="left:768px;top:473.9px;width:20px;text-align:center;font-size:11px;color:#e0e0e0">30</div><div class="t" style="left:786px;top:473.9px;width:20px;text-align:center;font-size:11px;color:#e0e0e0">31</div><div class="t" style="left:804px;top:473.9px;width:20px;text-align:center;font-size:11px;color:#e0e0e0">32</div>

<svg class="a" style="left:0;top:0" width="850" height="600" viewBox="0 0 850 600">
  <rect x="98.1" y="190.85" width="506.6" height="254.8" fill="#e46a87" stroke="#7a0a14" stroke-width="1.4"/>
  <g stroke="#c00a1e" stroke-width="1" fill="none" shape-rendering="crispEdges">
    <line x1="98" y1="231" x2="604" y2="353"/>
    <line x1="137" y1="191" x2="213.5" y2="445"/>
    <line x1="180.5" y1="191" x2="366" y2="445"/>
    <line x1="288.5" y1="191" x2="486" y2="445"/>
    <line x1="300.5" y1="191" x2="98" y2="403"/>
    <line x1="98" y1="271" x2="299" y2="445"/>
    <line x1="364" y1="191" x2="239" y2="445"/>
    <line x1="444" y1="191" x2="415" y2="445"/>
    <line x1="471.7" y1="191" x2="526.5" y2="445"/>
    <line x1="585" y1="191" x2="500.5" y2="445"/>
  </g>
  <g stroke="#b83048" stroke-width="1" fill="none">
    <line x1="323.5" y1="187" x2="323.5" y2="312"/>
    <line x1="323.5" y1="311.5" x2="442.5" y2="311.5"/>
  </g>
  <g font-family="Liberation Sans" font-size="9">
    <text x="321.5" y="189" fill="#a83a48">y</text>
    <text x="322.5" y="309" fill="#b8506a">z</text>
    <text x="442" y="309" fill="#b84a5a">x</text>
  </g>
</svg>


<svg class="a" style="left:655px;top:530px" width="100" height="70" viewBox="655 530 100 70">
  <g fill="none" stroke="rgba(190,160,50,0.3)" stroke-width="5" stroke-linejoin="miter">
    <path d="M669 542 L693 552 L693 582 L670 573"/>
    <path d="M671 558 L691 566"/>
  </g>
  <g fill="none" stroke="rgba(160,40,45,0.3)" stroke-width="5">
    <path d="M699 582 L699 550 L718 543 L750 543"/>
    <path d="M699 578 L720 570 L720 549"/>
  </g>
</svg>
<svg class="a" style="left:0;top:0" width="850" height="600" viewBox="0 0 850 600">
  <rect x="756" y="490" width="74.5" height="21.5" fill="none" stroke="#e83a3a" stroke-width="3"/>
  <path d="M496.7 397.8 L748 481 L757.7 491.7 L740.5 494.5 L738.5 488.6 L496.7 399.2 Z" fill="#ef3838" stroke="rgba(170,20,20,0.35)" stroke-width="0.6"/>
</svg>
</body></html>
